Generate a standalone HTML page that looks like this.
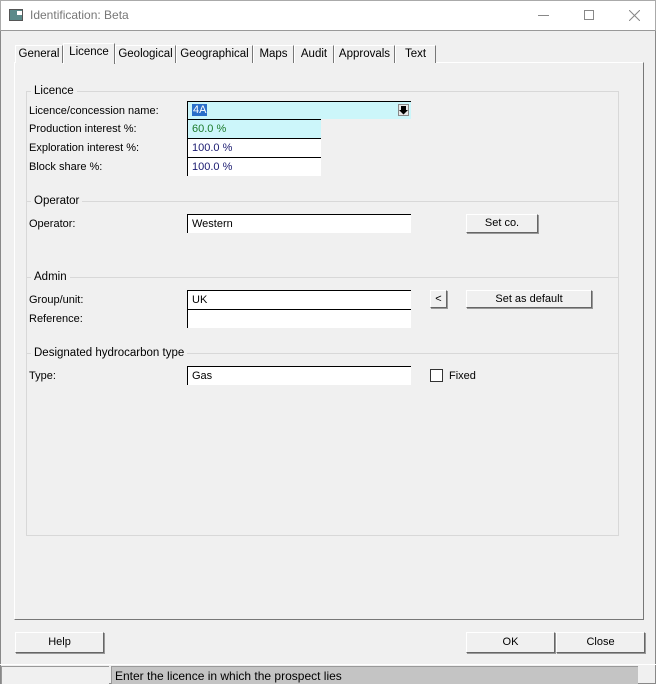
<!DOCTYPE html>
<html><head><meta charset="utf-8"><style>
*{box-sizing:border-box;margin:0;padding:0}
body{width:659px;height:684px;background:#fff;position:relative;overflow:hidden;font-family:"Liberation Sans",Arial,sans-serif;font-size:11px;color:#000}
.a{position:absolute}
.win{left:0;top:0;width:656px;height:684px;background:#f0f0f0;border:1px solid #888;border-top:none}
.title{left:0;top:0;width:656px;height:31px;background:#fff;border:1px solid #aaa;border-bottom:1px solid #999}
.tab{top:45px;height:18px;background:#f0f0f0;border-top:1px solid #fff;border-left:1px solid #fff;border-right:1px solid #777;font-size:11.5px;text-align:center;line-height:16px;color:#000;white-space:nowrap}
.panel{left:14px;top:62px;width:630px;height:558px;border-left:1px solid #fff;border-top:1px solid #fff;border-right:1px solid #777;border-bottom:1px solid #777}
.gb{left:26px;top:91px;width:593px;height:445px;border:1px solid #d8d8d8}
.hl{height:1px;background:#d8d8d8;left:26px;width:593px}
.gl{background:#f0f0f0;padding:0 3px;font-size:11.5px}
.lbl{font-size:11px}
.in{background:#fff;border-top:1px solid #000;border-left:1px solid #000;height:19px;padding-left:4px;line-height:18px;font-size:11px}
.btn{background:#f0f0f0;border-top:1px solid #fff;border-left:1px solid #fff;border-right:1px solid #666;border-bottom:1px solid #666;box-shadow:1px 1px 0 #999;text-align:center;font-size:11px}
</style></head><body>
<div class="a win"></div>
<div class="a title"></div>
<div class="a" style="left:9px;top:9px;width:14px;height:12px;background:#5a8a8a;border:1px solid #555"><div class="a" style="left:7px;top:1px;width:5px;height:4px;background:#fff"></div></div>
<div class="a" style="left:30px;top:8px;font-size:12px;color:#777">Identification: Beta</div>
<div class="a" style="left:538px;top:15px;width:11px;height:1px;background:#888"></div>
<div class="a" style="left:584px;top:10px;width:10px;height:10px;border:1px solid #888"></div>
<svg class="a" style="left:629px;top:10px" width="11" height="11"><path d="M0 0L11 11M11 0L0 11" stroke="#888" stroke-width="1"/></svg>

<div class="a panel"></div>
<div class="a tab" style="left:15px;width:48px">General</div>
<div class="a tab" style="left:63px;top:43px;height:21px;width:52px;border-bottom:none">Licence</div>
<div class="a tab" style="left:115px;width:61px">Geological</div>
<div class="a tab" style="left:176px;width:77px">Geographical</div>
<div class="a tab" style="left:253px;width:41px">Maps</div>
<div class="a tab" style="left:294px;width:40px">Audit</div>
<div class="a tab" style="left:334px;width:61px">Approvals</div>
<div class="a tab" style="left:395px;width:41px">Text</div>

<div class="a gb"></div>
<div class="a hl" style="top:201px"></div>
<div class="a hl" style="top:277px"></div>
<div class="a hl" style="top:353px"></div>
<div class="a gl" style="left:31px;top:85px">Licence</div>
<div class="a gl" style="left:31px;top:195px">Operator</div>
<div class="a gl" style="left:31px;top:271px">Admin</div>
<div class="a gl" style="left:31px;top:347px">Designated hydrocarbon type</div>

<div class="a lbl" style="left:29px;top:105px">Licence/concession name:</div>
<div class="a lbl" style="left:29px;top:123px">Production interest %:</div>
<div class="a lbl" style="left:29px;top:142px">Exploration interest %:</div>
<div class="a lbl" style="left:29px;top:161px">Block share %:</div>
<div class="a lbl" style="left:29px;top:218px">Operator:</div>
<div class="a lbl" style="left:29px;top:294px">Group/unit:</div>
<div class="a lbl" style="left:29px;top:313px">Reference:</div>
<div class="a lbl" style="left:29px;top:370px">Type:</div>

<div class="a in" style="left:187px;top:101px;width:224px;height:18px;background:#ccf6fa;line-height:16px"><span style="background:#2a6fc9;color:#fff;padding:0 1px">4A</span></div>
<div class="a" style="left:398px;top:104px;width:11px;height:12px;background:#e8e8e8;border:1px solid #888"><svg width="9" height="10"><path d="M2 1h5v4h2l-4.5 4.5L0 5h2z" fill="#000"/></svg></div>
<div class="a in" style="left:187px;top:119px;width:134px;background:#ccf6fa;color:#1c7a2a">60.0 %</div>
<div class="a in" style="left:187px;top:138px;width:134px;color:#1a1a70">100.0 %</div>
<div class="a in" style="left:187px;top:157px;width:134px;color:#1a1a70">100.0 %</div>
<div class="a in" style="left:187px;top:214px;width:224px">Western</div>
<div class="a in" style="left:187px;top:290px;width:224px">UK</div>
<div class="a in" style="left:187px;top:309px;width:224px"></div>
<div class="a in" style="left:187px;top:366px;width:224px">Gas</div>

<div class="a btn" style="left:466px;top:214px;width:72px;height:19px;line-height:17px">Set co.</div>
<div class="a btn" style="left:430px;top:290px;width:17px;height:18px;line-height:16px">&lt;</div>
<div class="a btn" style="left:466px;top:290px;width:126px;height:18px;line-height:16px">Set as default</div>
<div class="a" style="left:430px;top:369px;width:13px;height:13px;background:#fff;border:1px solid #333"></div>
<div class="a lbl" style="left:449px;top:370px">Fixed</div>

<div class="a btn" style="left:15px;top:632px;width:89px;height:21px;line-height:19px">Help</div>
<div class="a btn" style="left:466px;top:632px;width:89px;height:21px;line-height:19px">OK</div>
<div class="a btn" style="left:556px;top:632px;width:89px;height:21px;line-height:19px">Close</div>

<div class="a" style="left:0;top:664px;width:656px;height:1px;background:#fff"></div>
<div class="a" style="left:1px;top:666px;width:108px;height:18px;border-top:1px solid #999;border-left:1px solid #999;background:#f0f0f0"></div>
<div class="a" style="left:111px;top:666px;width:527px;height:18px;background:#c4c4c4;border-top:1px solid #999;border-left:1px solid #999;font-size:12px;line-height:18px;padding-left:3px">Enter the licence in which the prospect lies</div>
</body></html>
